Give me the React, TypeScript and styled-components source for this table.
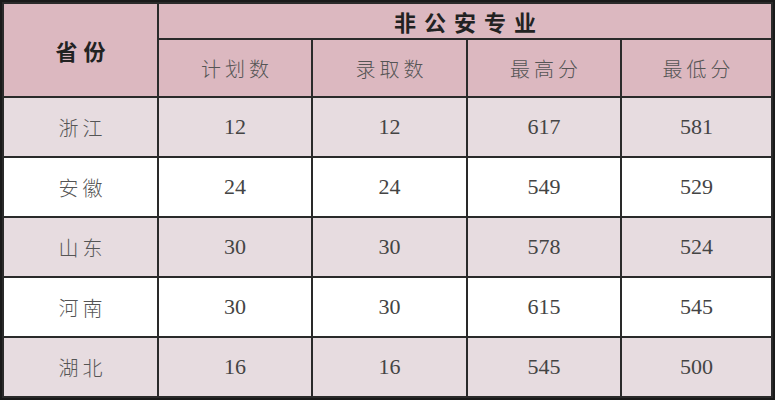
import React from 'react';
import styled, { createGlobalStyle } from 'styled-components';

const rows = [
  { province: '浙江', plan: 12, admit: 12, max: 617, min: 581 },
  { province: '安徽', plan: 24, admit: 24, max: 549, min: 529 },
  { province: '山东', plan: 30, admit: 30, max: 578, min: 524 },
  { province: '河南', plan: 30, admit: 30, max: 615, min: 545 },
  { province: '湖北', plan: 16, admit: 16, max: 545, min: 500 },
];

const App: React.FC = () => {
  return (
    <>
      <GlobalStyle />
      <Frame>
        <Table>
          <colgroup>
            <col style={{ width: 155 }} />
            <col style={{ width: 154 }} />
            <col style={{ width: 155 }} />
            <col style={{ width: 154 }} />
            <col />
          </colgroup>
          <thead>
            <tr>
              <HeadCell rowSpan={2} $bold>
                省份
              </HeadCell>
              <HeadCell colSpan={4} $bold $title>
                非公安专业
              </HeadCell>
            </tr>
            <tr>
              <HeadCell>计划数</HeadCell>
              <HeadCell>录取数</HeadCell>
              <HeadCell>最高分</HeadCell>
              <HeadCell>最低分</HeadCell>
            </tr>
          </thead>
          <tbody>
            {rows.map((r, i) => (
              <Row key={r.province} $shaded={i % 2 === 0}>
                <NameCell>{r.province}</NameCell>
                <NumCell>{r.plan}</NumCell>
                <NumCell>{r.admit}</NumCell>
                <NumCell>{r.max}</NumCell>
                <NumCell>{r.min}</NumCell>
              </Row>
            ))}
          </tbody>
        </Table>
      </Frame>
    </>
  );
};

export default App;

const GlobalStyle = createGlobalStyle`
  html, body {
    margin: 0;
    padding: 0;
    background: #111;
  }
`;

const Frame = styled.div`
  width: 775px;
  height: 400px;
  box-sizing: border-box;
  padding: 2px 2px 3px 2px;
  background: #1a1a1a;
`;

const Table = styled.table`
  width: 771px;
  height: 395px;
  border-collapse: collapse;
  table-layout: fixed;
  color: #4a4a4a;
`;

const HeadCell = styled.th<{ $bold?: boolean; $title?: boolean }>`
  background: #dcb8c0;
  border: 2px solid #2a2a2a;
  height: ${({ $title }) => ($title ? '34px' : '56px')};
  padding: 0;
  text-align: center;
  vertical-align: middle;
  font-family: 'Noto Sans CJK SC', sans-serif;
  font-size: ${({ $bold }) => ($bold ? '22px' : '20px')};
  font-weight: ${({ $bold }) => ($bold ? 700 : 300)};
  color: ${({ $bold }) => ($bold ? '#222' : '#555')};
  letter-spacing: ${({ $title, $bold }) => ($title ? '8px' : $bold ? '6px' : '4px')};
  padding-left: ${({ $title, $bold }) => ($title ? '8px' : $bold ? '6px' : '4px')};
`;

const Row = styled.tr<{ $shaded: boolean }>`
  background: ${({ $shaded }) => ($shaded ? '#e7dce0' : '#ffffff')};
  height: 60px;
`;

const NameCell = styled.td`
  border: 2px solid #2a2a2a;
  text-align: center;
  font-family: 'Noto Sans CJK SC', sans-serif;
  font-weight: 300;
  font-size: 20px;
  letter-spacing: 4px;
  padding: 0 0 0 4px;
  color: #555;
`;

const NumCell = styled.td`
  border: 2px solid #2a2a2a;
  text-align: center;
  font-family: 'Liberation Serif', serif;
  font-size: 22px;
  padding: 0;
  color: #444;
`;
